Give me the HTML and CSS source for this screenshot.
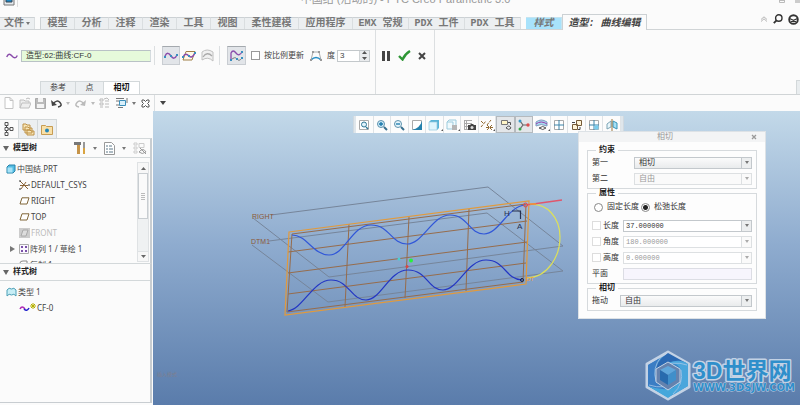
FILE: index.html
```
<!DOCTYPE html>
<html lang="zh-CN">
<head>
  <meta charset="UTF-8" />
  <meta name="viewport" content="width=device-width, initial-scale=1.0"/>
  <title>中国结 - PTC Creo Parametric 3.0</title>
  <link rel="stylesheet" href="styles.css">
</head>
<body>

<!-- Title bar -->
<header class="titlebar">
  <svg class="app-icon" width="18" height="14" viewBox="0 0 18 14"><path d="M1 0v11h10V0" fill="#e4e9ed" stroke="#777"/><path d="M3 3h6v5H3z" fill="#1d87c4" stroke="#345"/><path d="M14.500 0v13" stroke="#ddd"/></svg>
  <h1 class="window-title">中国结 (活动的) - PTC Creo Parametric 3.0</h1>
  <svg class="window-icons" width="24" height="12" viewBox="0 0 24 12"><path d="M3.500 4v4.500h5V4M3 6.500h6" fill="none" stroke="#bbb"/><path d="M19 3h5v6h-5z" fill="#ccc"/></svg>
</header>

<!-- Main tabs -->
<nav class="tabs">
  <button class="tab file">文件<span class="caret"></span></button>
  <div class="tab-group">
    <button class="tab">模型</button>
    <button class="tab">分析</button>
    <button class="tab">注释</button>
    <button class="tab">渲染</button>
    <button class="tab">工具</button>
    <button class="tab">视图</button>
    <button class="tab wide">柔性建模</button>
    <button class="tab wide">应用程序</button>
    <button class="tab pdx">EMX 常规</button>
    <button class="tab pdx">PDX 工件</button>
    <button class="tab pdx">PDX 工具</button>
  </div>
  <button class="tab style">样式</button>
  <button class="tab current">造型: 曲线编辑</button>
  <div class="tab-tools">
    <svg width="8" height="6" viewBox="0 0 8 6"><path d="M1 3.500L4 .8l3 2.700M1 5.500L4 2.800l3 2.700" fill="none" stroke="#b5b5b5"/></svg>
    <svg width="10" height="10" viewBox="0 0 10 10"><circle cx="5.800" cy="4" r="3.200" fill="none" stroke="#333" stroke-width="1.400"/><path d="M3.500 6.300L.8 9.200" stroke="#333" stroke-width="1.800"/></svg>
    <svg width="11" height="11" viewBox="0 0 11 11"><circle cx="5.500" cy="5.500" r="4.300" fill="#fff" stroke="#333" stroke-width="1.900"/><path d="M1.500 4.500l4 1.800 4-1.800M3 7.500h5" fill="none" stroke="#333" stroke-width="1.200"/></svg>
  </div>
</nav>

<!-- Ribbon -->
<section class="ribbon">
  <div class="group edit">
    <div class="tools">
      <svg class="curve-icon" width="12" height="8" viewBox="0 0 12 8"><path d="M.7 5C2 1.500 4 1.500 6 4s4 2.500 5.300-.5" fill="none" stroke="#8a4cab" stroke-width="1.400"/></svg>
      <input class="reference" aria-label="曲线" value="造型:62:曲线:CF-0" readonly>
      <span class="sep"></span>
      <button class="tool on" aria-label="自由曲线"><svg width="14" height="10" viewBox="0 0 14 10"><path d="M1 5c2-4 4-3 6 0s4 3 6-1" fill="none" stroke="#8a4cab" stroke-width="1.500"/><path d="M0 5h2v2H0zM6 4h2v2H6zM12 3h2v2h-2z" fill="#3a8fc0"/></svg></button>
      <button class="tool" aria-label="平面曲线"><svg width="14" height="12" viewBox="0 0 14 12"><path d="M4 1.500h9l-3 8.500H1z" fill="#fff8e8" stroke="#a08048"/><path d="M1 7c2-4 4-3 6-1s4 1 6-3" fill="none" stroke="#8a4cab" stroke-width="1.500"/><path d="M0 6h2v2H0zM6 5h2v2H6zM12 2h2v2h-2z" fill="#3a8fc0"/></svg></button>
      <button class="tool" aria-label="COS" disabled><svg width="13" height="13" viewBox="0 0 13 13"><path d="M1 3q5-4 11 0v9Q7 7 1 11z" fill="#f0f0f0" stroke="#c0c0c0"/><path d="M2 8q4-6 9-1" fill="none" stroke="#aaa" stroke-width="1.300"/></svg></button>
      <span class="sep"></span>
      <button class="tool on last" aria-label="控制点"><svg width="15" height="14" viewBox="0 0 15 14"><path d="M2 11V4q2-4 5 0t6-1" fill="none" stroke="#8a4cab" stroke-width="1.300"/><path d="M2 11q4-4 6-1t5-1" fill="none" stroke="#777"/><path d="M1 10h2v2H1zM7 9h2v2H7zM12 8h2v2h-2zM12 2h2v2h-2z" fill="#3a8fc0"/></svg></button>
      <label class="scale"><input type="checkbox" class="check">按比例更新</label>
      <svg class="degree-icon" width="12" height="12" viewBox="0 0 12 12"><path d="M1 10L3 2h6l2 8" fill="none" stroke="#aaa"/><path d="M1 10q5-5 10 0" fill="none" stroke="#268dc4" stroke-width="1.500"/><path d="M2 1h2v2H2zM8 1h2v2H8zM0 9h2v2H0zM10 9h2v2h-2z" fill="#999"/></svg>
      <label for="degree">度</label>
      <span class="spin"><input id="degree" value="3"><button class="spin-btn" aria-label="调整度"><svg width="5" height="9" viewBox="0 0 5 9"><path d="M2.500 0L5 3H0zM2.500 9L5 6H0z" fill="#555"/></svg></button></span>
    </div>
    <div class="subtabs">
      <button class="subtab">参考</button>
      <button class="subtab point">点</button>
      <button class="subtab active">相切</button>
    </div>
  </div>
  <div class="group confirm">
    <button class="tool" aria-label="暂停"><svg width="8" height="10" viewBox="0 0 8 10"><path d="M0 0h3v10H0zM5 0h3v10H5z" fill="#444"/></svg></button>
    <button class="tool" aria-label="确定"><svg width="13" height="11" viewBox="0 0 13 11"><path d="M1 6l3.500 3.500Q7 4 12 1" fill="none" stroke="#2e9635" stroke-width="2.400"/></svg></button>
    <button class="tool" aria-label="取消"><svg width="8" height="8" viewBox="0 0 8 8"><path d="M1 1l6 6M7 1L1 7" stroke="#444" stroke-width="2"/></svg></button>
  </div>
  <span class="ribbon-end"></span>
</section>

<!-- Quick access -->
<div class="quick">
  <div class="quick-left">
    <svg width="10" height="12" viewBox="0 0 10 12"><path d="M1 .5h5l3 3v8H1zM6 .5v3h3" fill="#fff" stroke="#c4c4c4"/></svg>
    <svg width="12" height="12" viewBox="0 0 12 12"><path d="M1 11V3h4l1 1h4v2M1 11l2-5h9l-2 5z" fill="#eee" stroke="#c0c0c0"/><path d="M7 2q2-2 4 0" fill="none" stroke="#bbb"/></svg>
    <svg width="11" height="11" viewBox="0 0 11 11"><path d="M.5.5h10v10H.5z" fill="#bbb" stroke="#aaa"/><path d="M3 0h5v4H3zM2 6h7v4H2z" fill="#f4f4f4"/></svg>
    <svg width="11" height="9" viewBox="0 0 11 9"><path d="M2 5q4-5 7-1.500T7 8" fill="none" stroke="#444" stroke-width="1.500"/><path d="M0 1l1 6 5-1z" fill="#444"/></svg>
    <span class="caret pale"></span>
    <svg class="redo" width="11" height="9" viewBox="0 0 11 9"><path d="M9 5Q5 0 2 3.500T4 8" fill="none" stroke="#bbb" stroke-width="1.500"/><path d="M11 1l-1 6-5-1z" fill="#bbb"/></svg>
    <span class="caret pale"></span>
    <svg width="11" height="12" viewBox="0 0 11 12"><path d="M1 2h3v2H1zM1 6h3v2H1zM1 10h3M6 4h4M6 7h4M6 10h4M5 2l3-1 2 2" fill="none" stroke="#bbb"/></svg>
    <svg width="13" height="12" viewBox="0 0 13 12"><path d="M1 1.500h8M1 4h3M1 8h3M3 10.500h5M12 1v5" stroke="#777"/><path d="M4.500 3.500h6v5h-6z" fill="#d9f0fb" stroke="#3c8eb9"/></svg>
    <span class="caret"></span>
    <svg width="9" height="9" viewBox="0 0 9 9"><path d="M1 1h2l1.500 1.500L6 1h2v2L6.500 4.500 8 6v2H6L4.500 6.500 3 8H1V6l1.500-1.500L1 3z" fill="#fff" stroke="#555"/></svg>
  </div>
  <span class="caret dark"></span>
</div>

<main class="work">
  <!-- Navigator -->
  <aside class="navigator">
    <div class="nav-tabs">
      <button class="nav-tab on" aria-label="模型树"><svg width="10" height="14" viewBox="0 0 10 14"><path d="M1 .5h3v3H1zM1 5.500h3v3H1zM1 10.500h3v3H1zM6 5.500h3v3H6zM2.500 4v1M2.500 9v1M4 7h2" fill="none" stroke="#555"/></svg></button>
      <button class="nav-tab" aria-label="文件夹"><svg width="13" height="13" viewBox="0 0 13 13"><path d="M1 1h3l1 1h3v5H1zM3 4h3l1 1h3v5H3zM5 7h3l1 1h3v4H5z" fill="#f8e6b8" stroke="#bd9147"/></svg></button>
      <button class="nav-tab" aria-label="收藏夹"><svg width="12" height="11" viewBox="0 0 12 11"><path d="M.5 1.500h4l1 1h6v8H.5z" fill="#f8e0a8" stroke="#c79c52"/><circle cx="6" cy="6.500" r="2" fill="#2586b8"/></svg></button>
    </div>
    <section class="model">
      <div class="nav-head">
        <span class="fold"></span><h2>模型树</h2>
        <div class="nav-tools">
          <svg width="12" height="14" viewBox="0 0 12 14"><path d="M0 1h7v3H0z" fill="#777"/><path d="M3 4h3v9H3z" fill="#c69449"/><path d="M10 1v6" stroke="#777" stroke-width="1.500"/><path d="M9 7h2v6H9z" fill="#d9a441"/></svg>
          <span class="caret"></span>
          <svg width="11" height="13" viewBox="0 0 11 13"><path d="M.5.500h7l3 3v9H.5z" fill="#fff" stroke="#999"/><path d="M2 4h2M5 4h3M2 7h2M5 7h4M2 10h2M5 10h4" stroke="#5d7889"/></svg>
          <span class="caret"></span>
          <svg width="14" height="13" viewBox="0 0 14 13"><path d="M1 1h3v2H1zM1 5h3v2H1zM1 9h3v2H1zM6 1.500h5v4H6z" fill="none" stroke="#ccc"/><path d="M6 10q4-5 7 0-4 3-7 0M7 6l6 6" fill="none" stroke="#999"/></svg>
        </div>
      </div>
      <div class="tree-area">
        <ul class="tree">
          <li class="root"><svg width="10" height="10" viewBox="0 0 10 10"><path d="M1 3l2-2h6v6L7 9H1z" fill="#54bde4" stroke="#2b82a8"/><path d="M1.500 3.500h5v5h-5z" fill="#a6e2f7"/></svg>中国结.PRT</li>
          <li><svg width="11" height="11" viewBox="0 0 11 11"><path d="M1 1l8 8M2 9l5-7M1 5.500h8" stroke="#8b6539"/><path d="M0 1h2M0 9h2M9 5h2" stroke="#333"/></svg>DEFAULT_CSYS</li>
          <li><svg width="11" height="8" viewBox="0 0 11 8"><path d="M3 .8h7L8 7H1z" fill="#fff" stroke="#806638"/></svg>RIGHT</li>
          <li><svg width="11" height="8" viewBox="0 0 11 8"><path d="M3 .8h7L8 7H1z" fill="#fff" stroke="#806638"/></svg>TOP</li>
          <li class="hidden-item"><svg width="11" height="10" viewBox="0 0 11 10"><path d="M0 0h11v10H0z" fill="#ccc"/><path d="M4 2h5L7 8H2z" fill="#ddd" stroke="#aaa"/></svg>FRONT</li>
          <li class="pattern"><span class="expand"></span><svg width="10" height="10" viewBox="0 0 10 10"><path d="M.5.500h9v9h-9z" fill="#faf6ff" stroke="#aaa"/><path d="M2 2h2v2H2zM6 2h2v2H6zM2 6h2v2H2zM6 6h2v2H6z" fill="#7a50a8"/></svg>阵列 1 / 草绘 1</li>
          <li><svg width="10" height="10" viewBox="0 0 10 10"><path d="M1 9V3q0-2 3-2h4v8" fill="#fff" stroke="#888"/></svg>复制 1</li>
        </ul>
        <div class="scrollbar">
          <span class="scroll-btn"><svg width="5" height="3" viewBox="0 0 5 3"><path d="M2.500 0L5 3H0z" fill="#666"/></svg></span>
          <span class="thumb"></span>
          <span class="scroll-btn end"><svg width="5" height="3" viewBox="0 0 5 3"><path d="M2.500 3L5 0H0z" fill="#666"/></svg></span>
        </div>
      </div>
    </section>
    <section class="styles">
      <div class="nav-head low"><span class="fold"></span><h2>样式树</h2></div>
      <ul class="tree">
        <li class="root"><svg width="11" height="10" viewBox="0 0 11 10"><path d="M1 9V3q2-3 4.500-1Q8 0 10 3v6Q8 6 5.500 8 3 6 1 9z" fill="#c7eef6" stroke="#4c9fb6"/></svg>类型 1</li>
        <li><svg class="cf" width="18" height="10" viewBox="0 0 18 10"><path d="M1 6q2-4 5 0" fill="none" stroke="#b02cb5" stroke-width="1.500"/><path d="M5 6q3 3 5-1" fill="none" stroke="#22c" stroke-width="1.500"/><path d="M14 0v6M11 3h6M12 1l4 4M16 1l-4 4" stroke="#b5b000"/></svg>CF-0</li>
      </ul>
    </section>
  </aside>

  <!-- Graphics window -->
  <div class="viewport">
    <svg class="scene" width="647" height="294" viewBox="153 111 647 294">
      <!-- datum planes -->
      <g fill="none" stroke="#76859a" stroke-width="1">
        <path d="M271 215L488 187L563 246L329 277L253 218"/>
        <path d="M269 241L487 213L563 271L328 302L252 245"/>
      </g>
      <!-- surface mesh -->
      <g fill="none" stroke="#966c4c" stroke-width="1">
        <path d="M292 234L526 204L523 282L287 312zM349 224L345 307M409 217L405 298M469 209L466 291"/>
        <path d="M288 252L527 221M288 273L527 242M288 294L526 263"/>
      </g>
      <path d="M289 232L529 201L526 284L285 315z" fill="none" stroke="#e29a3c" stroke-width="1.200"/>
      <!-- curves -->
      <path d="M292 235C307 235 313 255 329 255S352 225 371 225 391 244 407 244 432 215 450 215 469 234 484 234 508 206 525 205" fill="none" stroke="#3157d8" stroke-width="1.200"/>
      <path d="M288 311C303 309 313 280 331 280S351 300 366 300 389 270 408 270 428 290 443 290 467 260 486 260 505 279 522 280" fill="none" stroke="#2336c4" stroke-width="1.200"/>
      <path d="M526 205C548 201 560 219 560 237S549 277 527 278" fill="none" stroke="#dde05a" stroke-width="1.200"/>
      <path d="M526 205L562 200" stroke="#e0566c" stroke-width="1.300"/>
      <path d="M530 204h6" stroke="#f09a35" stroke-width="1.500"/>
      <circle cx="525.500" cy="205" r="2" fill="none" stroke="#e04c4c"/>
      <circle cx="522" cy="280" r="1.500" fill="none" stroke="#142246"/>
      <path d="M512 211h8.500v8" fill="none" stroke="#26304f" stroke-width="1.200"/>
      <!-- spin centre -->
      <circle cx="399" cy="259" r="1.500" fill="#48cfd3"/>
      <circle cx="411" cy="260.500" r="2" fill="#27f23b"/>
      <circle cx="407" cy="266.500" r="1.500" fill="#da4545"/>
      <text class="datum" x="252" y="219">RIGHT</text>
      <text class="datum" x="251" y="244">DTM1</text>
      <text class="axis" x="504" y="216">H</text>
      <text class="axis" x="517" y="229">A</text>
      <text class="dt" x="526" y="281">DT</text>
      <text class="insert-mode" x="157" y="376">插入模式</text>
      <!-- site logo -->
      <g stroke-linejoin="round">
        <path d="M668 352l21 12v23l-21 12-21-12v-23z" fill="#3a86c6" stroke="#c3d2e5" stroke-width="3"/>
        <path d="M668 353l20 11q-15-5-27 3l-6 8q0-13 13-22z" fill="#2b69b3"/>
        <path d="M688 364v22l-15 9q11-12 8-25-3-8-13-7 12-5 20 1z" fill="#4aa6dc"/>
        <path d="M648 365l12-7q-8 10-4 23l12 9 13-5-13 12-20-11z" fill="#3a7dc4"/>
        <path d="M648 386q14 5 25 2l8-7q-3 11-13 17z" fill="#45a7db"/>
        <path d="M656 381q-4-13 5-24M681 370q3 14-8 24M649 385q15 5 31-3M687 365q-14-5-29 3" fill="none" stroke="#a7c8e7" stroke-width=".8"/>
        <path d="M668 362l12 7v13l-12 8-12-8v-13z" fill="#6482ae" stroke="#c3d2e5"/>
        <path d="M668 366l8 4-8 5-8-5z" fill="#5fa6db"/><path d="M660 370l8 5v10l-8-5z" fill="#286bae"/><path d="M676 370l-8 5v10l8-5z" fill="#408fca"/>
      </g>
      <text class="brand" x="693" y="379">3D世界网</text>
      <text class="brand-url" x="693" y="391">WWW.3DSJW.COM</text>
    </svg>

    <div class="view-bar">
      <button aria-label="重新调整"><svg width="12" height="12" viewBox="0 0 12 12"><path d="M1.500 1.500h9v9h-9z" fill="#fff" stroke="#aaa"/><circle cx="6" cy="5.500" r="2.500" fill="#dff2fb" stroke="#2f7695"/><path d="M8 8l2 2" stroke="#2f7695" stroke-width="1.500"/></svg></button>
      <button aria-label="放大"><svg width="12" height="12" viewBox="0 0 12 12"><circle cx="5" cy="5" r="3.500" fill="#cceaf8" stroke="#5f93ae"/><path d="M3 5h4M5 3v4" stroke="#1777aa" stroke-width="1.300"/><path d="M8 8l3 3" stroke="#376f8e" stroke-width="2"/></svg></button>
      <button aria-label="缩小"><svg width="12" height="12" viewBox="0 0 12 12"><circle cx="5" cy="5" r="3.500" fill="#e4f4fb" stroke="#5f93ae"/><path d="M3 5h4" stroke="#1777aa" stroke-width="1.300"/><path d="M8 8l3 3" stroke="#376f8e" stroke-width="2"/></svg></button>
      <button aria-label="重画"><svg width="12" height="12" viewBox="0 0 12 12"><path d="M1.500 1.500h9v9h-9z" fill="#fff" stroke="#aaa"/><path d="M11 2v9H1Q9 9 11 2z" fill="#2380ac"/></svg></button>
      <button class="more" aria-label="显示样式"><svg width="12" height="12" viewBox="0 0 12 12"><path d="M1 3l2-2h8v8l-2 2H1z" fill="#59b4d7"/><path d="M1 3h8v8H1z" fill="#dff5fd" stroke="#92c7dc" stroke-width=".7"/></svg></button>
      <button class="more" aria-label="已保存方向"><svg width="12" height="12" viewBox="0 0 12 12"><path d="M1 3l2-2h7v5M1 3h6v7H1z" fill="#f0fafd" stroke="#9ccbdd"/><path d="M6 6h5v5H6z" fill="#b5b5b5"/></svg></button>
      <button aria-label="视图管理器"><svg width="13" height="12" viewBox="0 0 13 12"><path d="M1 1.500h8M1 4.500h8M1 7.500h5M1 10.500h4M3.500 1v10M1.500 1v10" stroke="#aaa"/><path d="M5 6h2l1-1h2l1 1h2v5H5z" fill="#444"/><circle cx="9" cy="8.500" r="1.500" fill="#ddd"/></svg></button>
      <button class="more" aria-label="基准显示"><svg width="13" height="12" viewBox="0 0 13 12"><path d="M1 8l5-6M7 6l4-5M1 2l3 3M7 6l5 5M12 6l-5 5M6 8.500h7" stroke="#926a32" stroke-dasharray="3 1"/></svg></button>
      <button class="on" aria-label="注释显示"><svg width="12" height="12" viewBox="0 0 12 12"><path d="M1.500 1.500h6v4h-6z" fill="#fff5c7" stroke="#777"/><path d="M8 3.500h2.500V6M6 9q3-4 5 0-2 3-5 0" fill="none" stroke="#555"/></svg></button>
      <button class="on" aria-label="旋转中心"><svg width="12" height="12" viewBox="0 0 12 12"><path d="M2 2l3 4-3 4M5 6h5" fill="none" stroke="#666" stroke-width="1.200"/><circle cx="2" cy="2" r="1.500" fill="#3899c8"/><circle cx="2" cy="10" r="1.500" fill="#38a748"/><circle cx="10" cy="6" r="1.700" fill="#dd4f4f"/></svg></button>
      <button class="more" aria-label="曲面显示"><svg width="13" height="12" viewBox="0 0 13 12"><path d="M1 3q5-4 11 0v4Q6 4 1 7z" fill="#a6dcf0" stroke="#7f9cc0"/><path d="M1 5q5-4 11 0" fill="none" stroke="#9c3bab"/><path d="M4 9q4-3 7 0-3 3-7 0" fill="#fff" stroke="#555"/></svg></button>
      <button aria-label="活动平面"><svg width="12" height="12" viewBox="0 0 12 12"><path d="M1.500 1.500h9v9h-9z" fill="#fff" stroke="#aaa"/><path d="M6 1v10M1 6h10" stroke="#3c85aa"/></svg></button>
      <button aria-label="平面方向"><svg width="12" height="12" viewBox="0 0 12 12"><path d="M5.500 1.500h5v5h-5zM1.500 5.500h5v5h-5z" fill="#fff3d6" stroke="#755b37"/><path d="M1 3.500h3M9 8v2.500H7" fill="none" stroke="#444"/></svg></button>
      <button aria-label="四视图"><svg width="12" height="12" viewBox="0 0 12 12"><path d="M1.500 1.500h9v9h-9z" fill="#fff" stroke="#aaa"/><path d="M6 1v10M1 6h10" stroke="#3c85aa"/><path d="M6.500 6.500h4v4h-4z" fill="#79cdee"/></svg></button>
      <button aria-label="镜像"><svg width="12" height="12" viewBox="0 0 12 12"><path d="M1 5l4-3v6L1 10z" fill="#e9f7fc" stroke="#7ca4b5"/><path d="M7 2l4 2v6L7 8z" fill="#a5e0f5" stroke="#3994b8"/><path d="M6 0v12" stroke="#99743d"/></svg></button>
    </div>

    <!-- Tangent dialog -->
    <form class="dialog">
      <div class="dialog-title"><h2>相切</h2><button type="button" class="close" aria-label="关闭"><svg width="6" height="6" viewBox="0 0 6 6"><path d="M1 1l4 4M5 1L1 5" stroke="#999" stroke-width="1.300"/></svg></button></div>
      <fieldset>
        <legend>约束</legend>
        <div class="row first"><label for="first">第一</label><span class="combo pick"><select id="first"><option>相切</option></select><span class="drop"></span></span></div>
        <div class="row first off"><label for="second">第二</label><span class="combo pick"><select id="second" disabled><option>自由</option></select><span class="drop"></span></span></div>
      </fieldset>
      <fieldset class="props">
        <legend>属性</legend>
        <div class="radios">
          <label><input type="radio" name="len">固定长度</label>
          <label><input type="radio" name="len" checked>松弛长度</label>
        </div>
        <div class="row"><label><input type="checkbox" class="check faint">长度</label><span class="combo"><input aria-label="长度值" value="37.000000"><span class="drop"></span></span></div>
        <div class="row off"><label><input type="checkbox" class="check faint">角度</label><span class="combo"><input aria-label="角度值" value="180.000000" disabled><span class="drop"></span></span></div>
        <div class="row off"><label><input type="checkbox" class="check faint">高度</label><span class="combo"><input aria-label="高度值" value="0.000000" disabled><span class="drop"></span></span></div>
        <div class="row"><label for="plane">平面</label><span class="combo plane"><input id="plane"></span></div>
      </fieldset>
      <fieldset>
        <legend>相切</legend>
        <div class="row drag"><label for="drag">拖动</label><span class="combo pick"><select id="drag"><option>自由</option></select><span class="drop"></span></span></div>
      </fieldset>
    </form>
  </div>
</main>

</body>
</html>
```
FILE: styles.css
```
* { box-sizing: border-box; }
body {
  margin: 0; height: 100vh; overflow: hidden;
  display: flex; flex-direction: column;
  background: #fbfbfb; color: #444;
  font: 8px/12px "Liberation Sans", "Noto Sans CJK SC", sans-serif;
}
button, input, select { font: inherit; color: inherit; margin: 0; padding: 0; border: 0; background: none; border-radius: 0; }
h1, h2 { margin: 0; font-size: inherit; }
svg { display: block; flex: none; }
ul { list-style: none; margin: 0; padding: 0; }

.caret { flex: none; border: 2px solid transparent; border-top: 3px solid #777; border-bottom: 0; }
.caret.pale { border-top-color: #bbb; }
.caret.dark { border-width: 4px 3px 0; border-top-color: #444; }

/* title bar */
.titlebar {
  flex: none; height: 14px; display: flex; justify-content: space-between; align-items: flex-start;
  overflow: hidden;
}
.app-icon, .window-icons { margin-top: -6px; }
.app-icon { margin-left: 3px; }
.window-title {
  margin-top: -9px; padding-left: 14px; color: #999; font-weight: normal;
  font-size: 11px; line-height: 16px;
}

/* tabs */
.tabs {
  flex: none; height: 16px; display: flex; align-items: flex-end;
  border-bottom: 1px solid #d0d4d6;
}
.tab {
  height: 12px; flex: none; width: 34px; background: #eceff1; border-top: 1px solid #ccd1d4;
  border-right: 1px solid #dadee0; color: #777; white-space: nowrap;
  font: bold 10px/11px "Liberation Mono", "Noto Sans CJK SC", monospace;
}
.tab.file { width: 35px; margin-right: 5px; display: flex; align-items: center; justify-content: center; gap: 2px; }
.tab-group { display: flex; border-left: 1px solid #ccd1d4; margin-right: 5px; }
.tab.wide { width: 54px; }
.tab.pdx { width: 56px; }
.tab.style { width: 36px; background: #a8e2fb; font-style: italic; border-color: #c5e4f0; }
.tab.current {
  width: 85px; height: 16px; margin-bottom: -1px; padding-top: 2px; background: #fbfbfb; border: 1px solid #ccd1d4;
  border-bottom: 0; font-style: italic; color: #444;
}
.tab-tools { margin-left: auto; height: 15px; display: flex; align-items: center; gap: 5px; padding: 0 1px 8px 0; }
.tab-tools svg { margin-top: 3px; }

/* ribbon */
.ribbon { flex: none; height: 65px; display: flex; border-bottom: 1px solid #d0d4d6; }
.group { border-right: 1px solid #dcdfe1; padding-top: 16px; }
.group.edit { width: 376px; display: flex; flex-direction: column; justify-content: space-between; }
.group.confirm { width: 59px; display: flex; align-items: flex-start; padding-left: 1px; }
.tools { height: 19px; display: flex; align-items: center; padding-left: 6px; }
.reference {
  width: 130px; height: 12px; margin: 0 3px; padding-left: 4px;
  background: #e6fadb; border: 1px solid #b9c2c6; border-right-color: #d5dcdf; color: #333;
}
.sep { width: 1px; height: 19px; background: #dcdfe1; margin-right: 7px; }
.tool { width: 18px; height: 19px; display: flex; align-items: center; justify-content: center; }
.tool.on { background: #e2e5e9; border: 1px solid #c9cdd2; border-top-color: #a4a9ae; }
.tools .sep:nth-of-type(2) { margin-left: 3px; }
.tool.last { margin-right: 5px; width: 19px; }
.check { appearance: none; width: 9px; height: 9px; border: 1px solid #999; background: #fff; }
.check.faint { border-color: #ddd; }
.check:checked { background: #555; }
.scale { display: flex; align-items: center; gap: 4px; white-space: nowrap; }
.degree-icon { margin: 0 5px 0 6px; }
.spin { display: flex; width: 33px; height: 12px; margin-left: 2px; border: 1px solid #c3c8cb; background: #fff; }
.spin input { width: 21px; padding-left: 2px; }
.spin-btn { flex: 1; display: flex; align-items: center; justify-content: center; background: #e9ebed; border-left: 1px solid #d0d4d6; }
.subtabs { display: flex; padding-left: 40px; }
.subtab {
  width: 36px; height: 13px; background: #eceff1; border: 1px solid #d3d8da;
  border-width: 1px 1px 0 0;
}
.subtab:first-child { border-left-width: 1px; }
.subtab.point { width: 28px; }
.subtab.active { background: #fff; font-weight: bold; color: #111; }
.ribbon-end { width: 4px; height: 14px; margin: auto 0 0 auto; background: #e9edef; border: 1px solid #d3d8da; border-width: 1px 0 0 1px; }

/* quick access bar */
.quick { flex: none; height: 16px; display: flex; align-items: center; gap: 5px; }
.quick-left {
  width: 155px; height: 16px; padding: 0 4px; border-right: 1px solid #dcdfe1;
  display: flex; align-items: center; justify-content: space-between;
}

/* work area */
.work { flex: 1; min-height: 0; display: flex; }
.navigator { flex: none; width: 153px; display: flex; flex-direction: column; padding: 8px 1px 2px 0; }
.nav-tabs { flex: none; height: 19px; display: flex; }
.nav-tab {
  width: 19px; display: flex; align-items: center; justify-content: center;
  background: #eceff1; border: 1px solid #d3d8da; border-width: 1px 1px 0 0;
}
.nav-tab.on { background: #fbfbfb; }
.model, .styles { border-right: 2px solid #c8cdd1; }
.model { flex: none; height: 125px; border-top: 1px solid #d3d8da; display: flex; flex-direction: column; }
.styles { flex: 1; border-top: 1px solid #d3d8da; border-bottom: 1px solid #c8cdd1; }
.nav-head {
  flex: none; height: 19px; display: flex; align-items: center; padding: 0 3px; gap: 4px;
  border-bottom: 1px solid #d3d8da; color: #222;
}
.nav-head.low { height: 17px; }
.fold { border: 3px solid transparent; border-top: 5px solid #666; border-bottom: 0; }
.nav-tools { margin-left: auto; display: flex; align-items: center; gap: 7px; }
.tree-area { flex: 1; min-height: 0; display: flex; justify-content: space-between; overflow: hidden; }
.tree { padding: 3px 0 0 6px; font: 8px/16px "Noto Sans", "Noto Sans CJK SC", sans-serif; }
.tree li { height: 16px; padding-left: 13px; display: flex; align-items: center; gap: 1px; white-space: nowrap; }
.tree li.root { padding-left: 0; }
.tree li.pattern { padding-left: 4px; }
.expand { border: 3px solid transparent; border-left: 5px solid #777; border-right: 0; margin-right: 3px; }
.hidden-item { color: #bbb; }
.styles .tree { padding-top: 3px; }
.cf { margin-right: -1px; }
.scrollbar { width: 12px; margin: 4px 1px 1px 0; background: #eff1f2; border: 1px solid #dfe2e4; display: flex; flex-direction: column; }
.scroll-btn { height: 10px; display: flex; align-items: center; justify-content: center; background: #f7f7f7; }
.scroll-btn.end { margin-top: auto; border-top: 1px solid #dfe2e4; }
.thumb {
  height: 46px; border: 1px solid #c8cdd1;
  background: repeating-linear-gradient(#bbb 0 1px, transparent 1px 2px) center / 4px 7px no-repeat, #fafafa;
}

/* graphics window */
.viewport { flex: 1; min-width: 0; position: relative; overflow: hidden; background: linear-gradient(#c3d9e9, #8faccf 45%, #5a7cab); }
.scene { position: absolute; top: 0; left: 0; }
.datum { font-size: 7px; fill: #8b5a38; }
.axis { font-size: 8px; fill: #26304f; }
.dt { font-size: 6px; fill: #f09a35; }
.insert-mode { font-size: 5px; fill: #7c7f90; }
.brand, .brand-url { fill: #2f8fcb; stroke: #c3d2e5; stroke-width: 3px; paint-order: stroke; stroke-linejoin: round; }
.brand { font: bold 23px "Liberation Sans", "Noto Sans CJK SC", sans-serif; }
.brand-url { font: bold 10px "DejaVu Sans", sans-serif; stroke-width: 1px; }
.view-bar {
  position: absolute; top: 5px; left: 200px; width: 271px; height: 17px; padding: 0 2px;
  display: flex; background: #dfe6eb; border: 1px solid #d0d9e0; border-width: 0 1px;
}
.view-bar button {
  flex: 1; display: flex; align-items: center; justify-content: center;
  background: #fcfcfc; border-right: 1px solid #dfe3e6; position: relative;
}
.view-bar button.on { background: #e3e6e9; border: 1px solid #b5babe; }
.view-bar .more::after {
  content: ""; position: absolute; right: 0; bottom: 2px;
  border: 1px solid #555; border-top-color: transparent; border-left-color: transparent;
}

/* dialog */
.dialog {
  position: absolute; top: 20px; right: 34px; width: 188px; padding-bottom: 7px;
  background: #fdfdfd; border: 1px solid #dde2e6; color: #333;
}
.dialog-title { height: 10px; display: flex; align-items: center; background: #f3f4f5; color: #999; }
.dialog-title h2 { flex: 1; text-align: center; font-weight: normal; line-height: 10px; }
.close { width: 14px; }
fieldset { margin: 0 8px; padding: 0 4px 3px; border: 1px solid #d6dadd; min-width: 0; }
.dialog-title + fieldset { margin-top: 2px; }
legend { margin-left: 4px; padding: 0 3px; font-weight: bold; line-height: 12px; color: #222; }
fieldset + fieldset { margin-top: -2px; }
.row { display: grid; grid-template-columns: 31px 1fr; align-items: center; height: 13px; }
.row + .row { margin-top: 3px; }
.row.first { grid-template-columns: 42px 1fr; }
.row.drag { grid-template-columns: 28px 1fr; }
.row label { display: flex; align-items: center; gap: 2px; white-space: nowrap; }
.radios { height: 12px; margin: 2px 0 6px 2px; display: flex; gap: 2px; }
.radios label { display: flex; align-items: center; gap: 4px; }
.radios input { appearance: none; width: 9px; height: 9px; border: 1px solid #888; border-radius: 50%; background: #fff; }
.radios input:checked { background: radial-gradient(#222 2px, #fff 3px); }
.combo { display: flex; height: 12px; border: 1px solid #c3c8cc; background: #fff; }
.combo select, .combo input { appearance: none; flex: 1; min-width: 0; padding-left: 2px; line-height: 10px; }
.combo input { font-family: "Liberation Mono", monospace; font-size: 7px; }
.pick { background: linear-gradient(#fbfbfb, #e9ebec); }
.combo.pick select { padding-left: 4px; }
.drop { width: 10px; border-left: 1px solid #c3c8cc; background: #eceeef; display: flex; align-items: center; justify-content: center; }
.drop::after { content: ""; border: 2px solid transparent; border-top: 3px solid #777; border-bottom: 0; }
.off .combo { border-color: #dde0e2; }
.off .pick, .off .drop { background: #fafafa; }
.off .drop { border-color: #dde0e2; }
.off .drop::after { border-top-color: #aaa; }
.off select, .off input { opacity: 1; color: #999; }
.plane { background: #f7f5fd; border-color: #dcdde4; }
```
